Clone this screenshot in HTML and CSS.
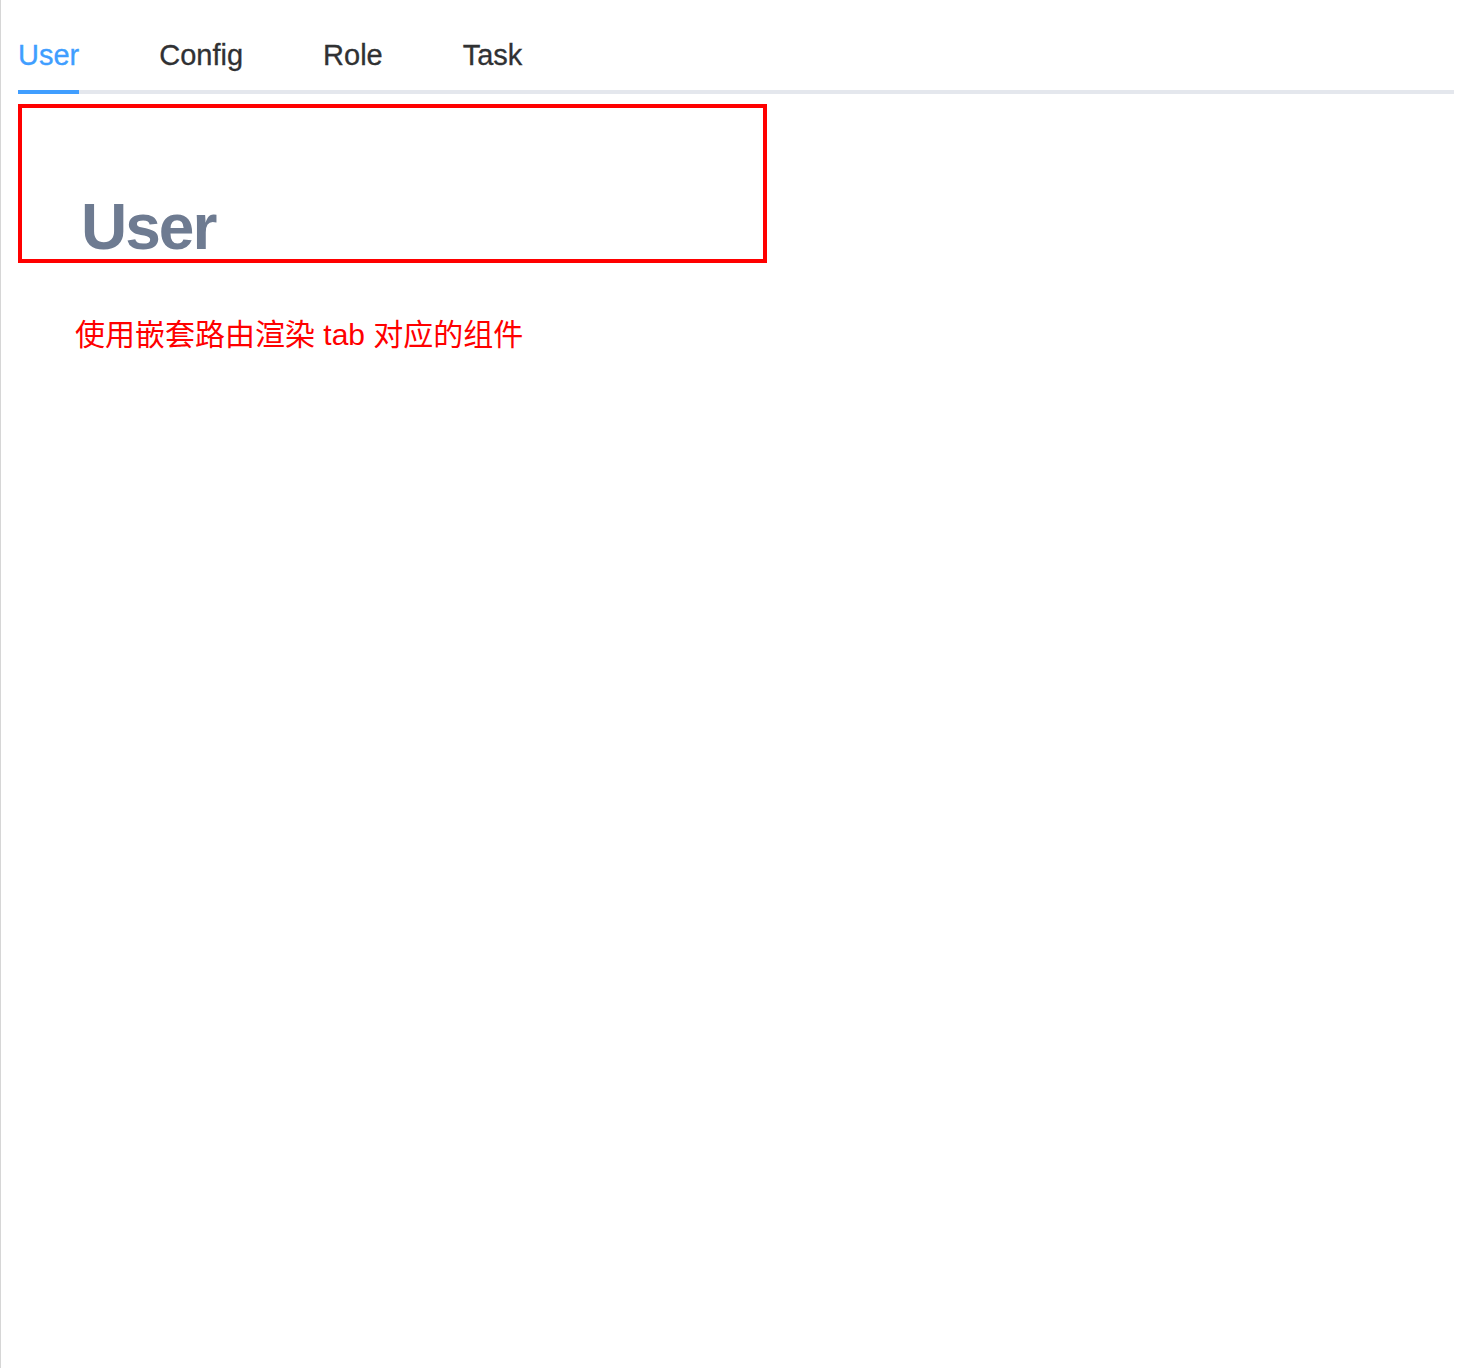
FILE: index.html
```html
<!DOCTYPE html>
<html lang="zh-CN">
<head>
<meta charset="utf-8">
<title>Tabs</title>
<link rel="stylesheet" href="styles.css">
</head>
<body>
<div class="app">
  <div class="tabs">
    <div class="tabs-nav">
      <div class="tab tab-active">User</div>
      <div class="tab">Config</div>
      <div class="tab">Role</div>
      <div class="tab">Task</div>
    </div>
  </div>
  <div class="panel">
    <h1 class="panel-title">User</h1>
  </div>
  <p class="note">使用嵌套路由渲染 tab 对应的组件</p>
</div>
</body>
</html>
```

FILE: styles.css
```css
html, body {
  margin: 0;
  padding: 0;
  background: #ffffff;
}

body {
  font-family: "Liberation Sans", "Noto Sans CJK SC", sans-serif;
}

.app {
  min-height: 1368px;
  box-sizing: border-box;
  border-left: 1px solid #d6d6d6;
  padding: 14px 16px 0 17px;
}

.tabs-nav {
  display: flex;
  height: 80px;
  border-bottom: 4px solid #e4e7ed;
  box-sizing: border-box;
}

.tab {
  position: relative;
  height: 80px;
  line-height: 82px;
  padding: 0 40px;
  font-size: 29px;
  color: #303133;
  box-sizing: border-box;
  -webkit-text-stroke: 0.3px #303133;
}

.tab:first-child {
  padding-left: 0;
}

.tab-active {
  color: #409eff;
  -webkit-text-stroke: 0.3px #409eff;
}

.tab-active::after {
  content: "";
  position: absolute;
  left: 0;
  right: 40px;
  bottom: 0;
  height: 4px;
  background: #409eff;
}

.panel {
  margin-top: 10px;
  width: 749px;
  height: 159px;
  box-sizing: border-box;
  border: 4px solid #ff0000;
  padding: 90px 0 0 59px;
}

.panel-title {
  margin: 0;
  font-size: 64px;
  line-height: 58px;
  font-weight: 700;
  letter-spacing: -2px;
  color: #6e7b91;
}

.note {
  margin: 52px 0 0 57px;
  font-size: 30px;
  line-height: 40px;
  color: #ff0000;
}
```
